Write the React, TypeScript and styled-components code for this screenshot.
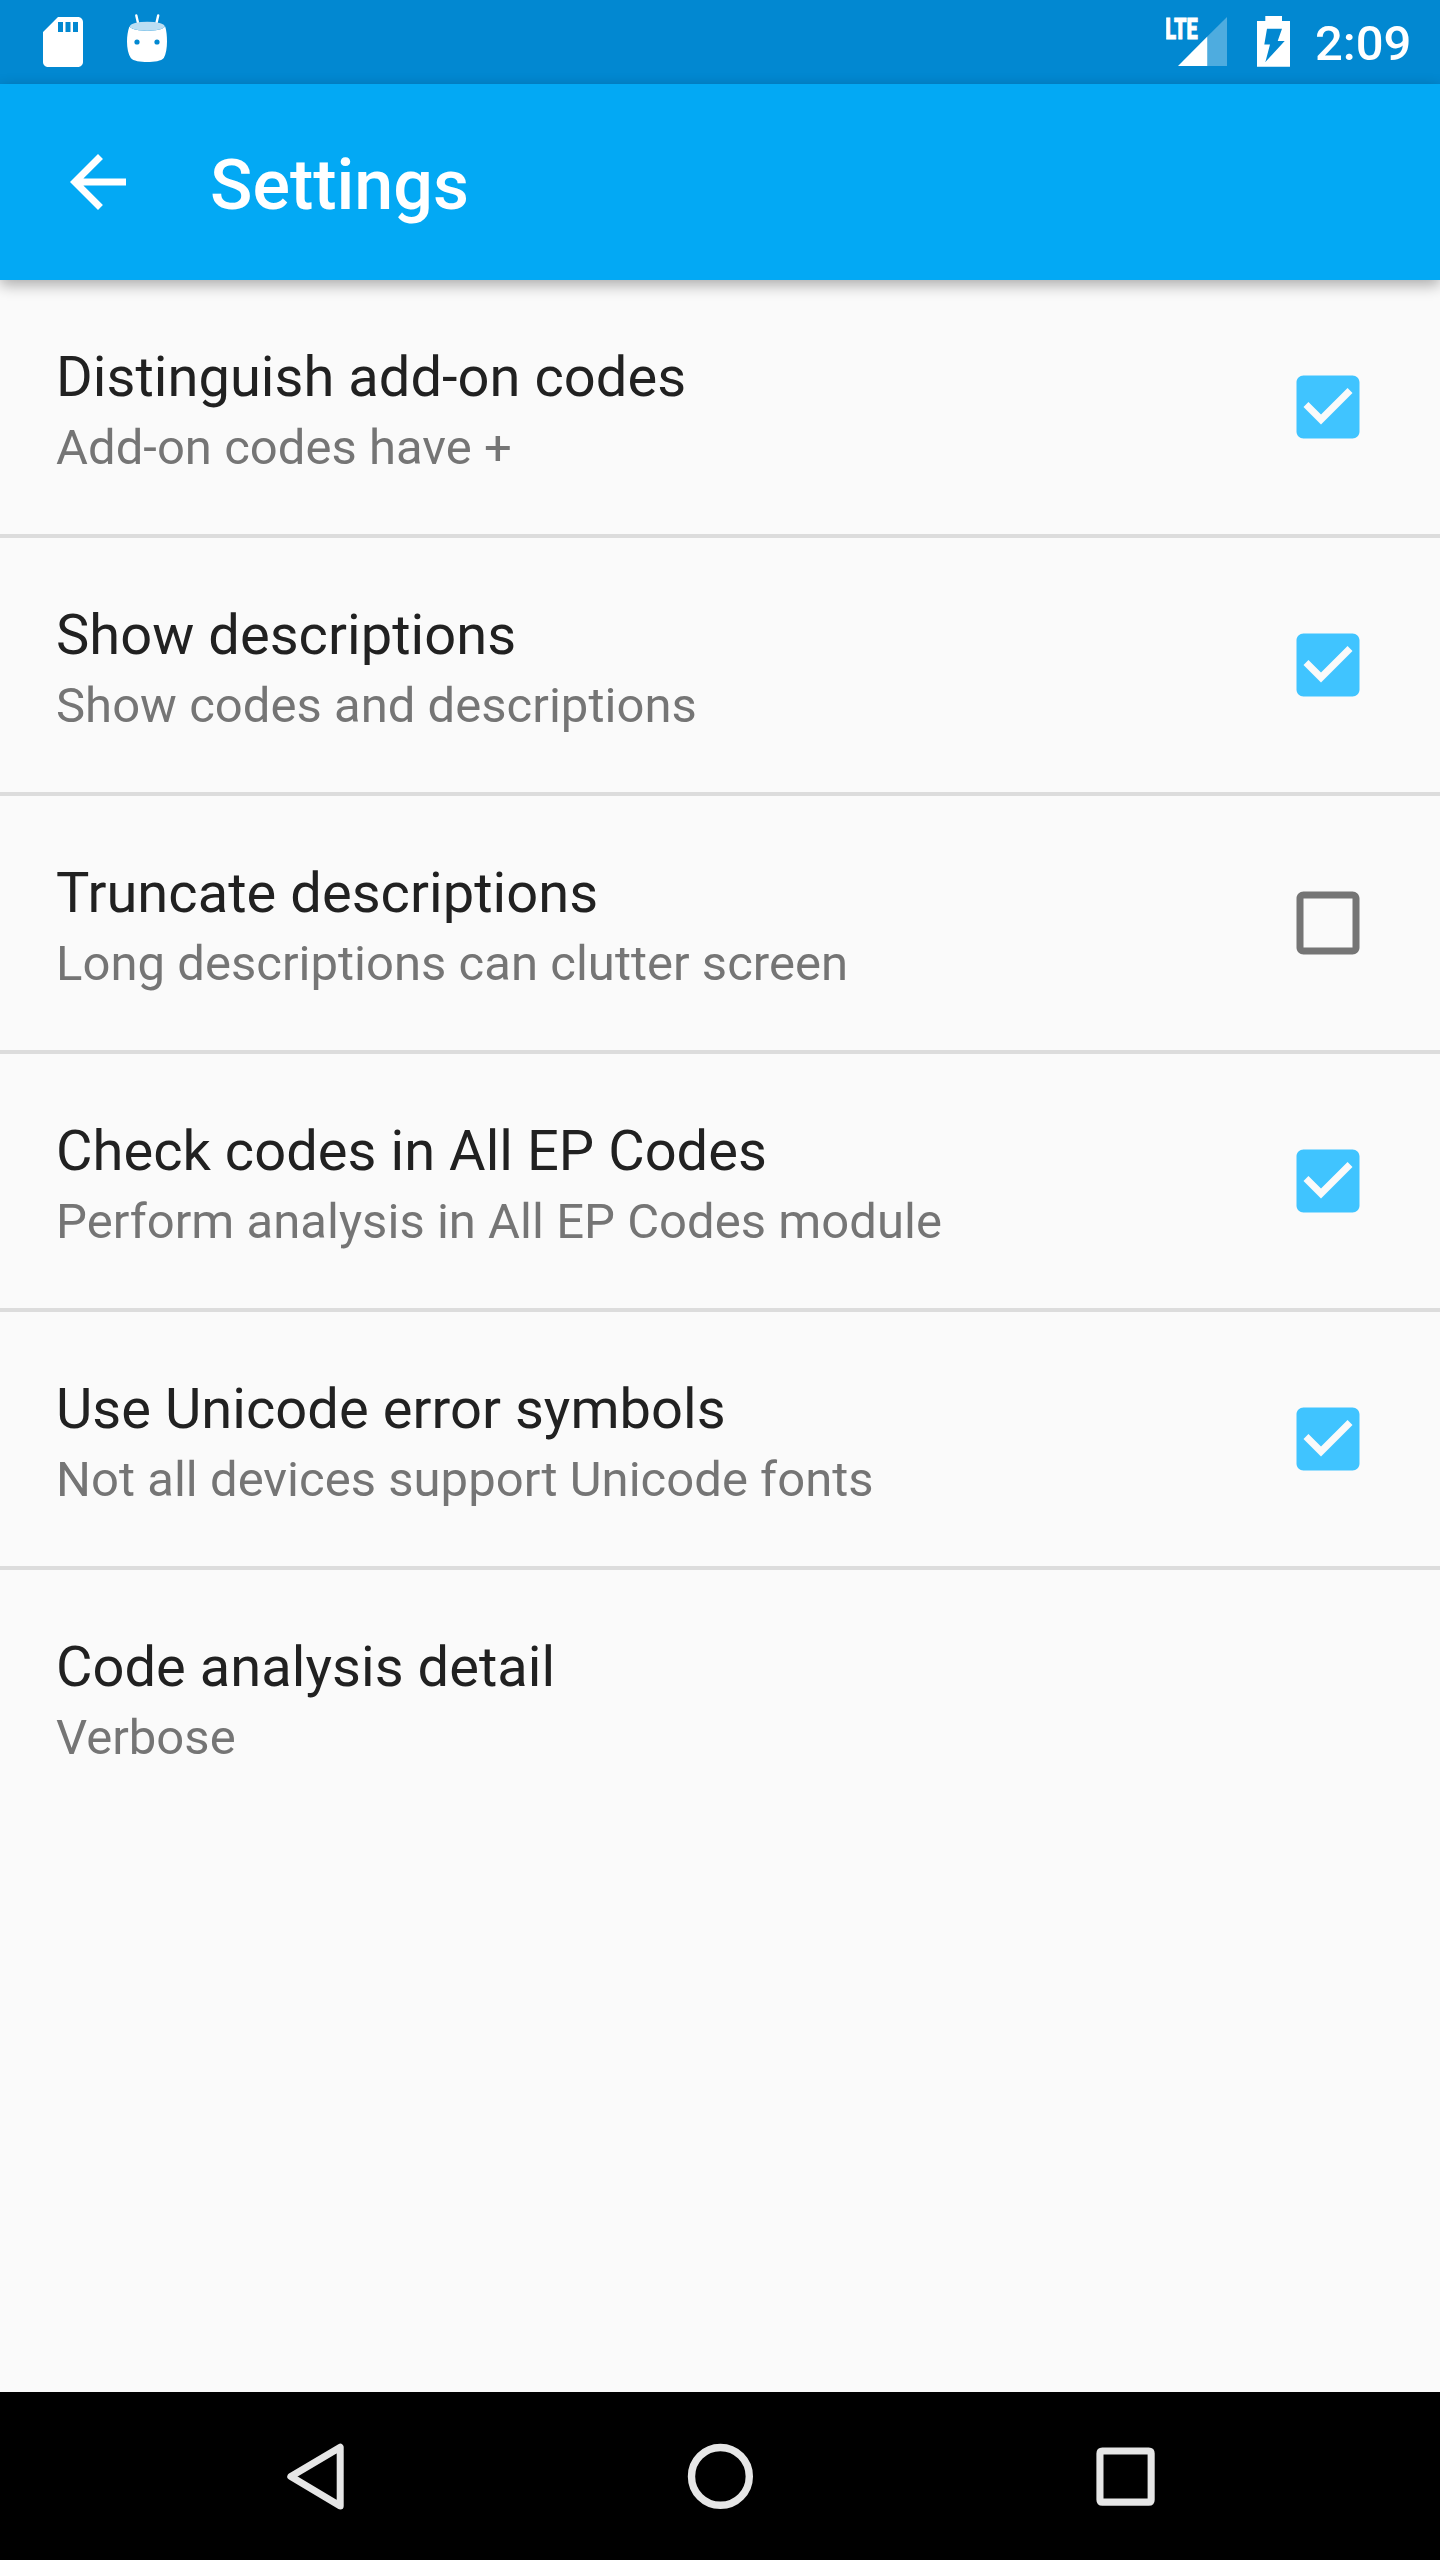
import React, { useState } from "react";
import styled, { createGlobalStyle } from "styled-components";

const GlobalStyle = createGlobalStyle`
  *, *::before, *::after { box-sizing: border-box; }
  body {
    margin: 0;
    background: #fafafa;
    font-family: Roboto, "Liberation Sans", sans-serif;
  }
  svg { display: block; flex: none; }
`;

const Screen = styled.div`
  display: flex;
  flex-direction: column;
  width: 1440px;
  height: 2560px;
  overflow: hidden;
  background: #fafafa;
`;

const StatusBar = styled.header`
  display: flex;
  flex: none;
  align-items: center;
  justify-content: space-between;
  height: 84px;
  padding: 0 28px 0 33px;
  background: #0288d1;
  color: #fff;
`;

const Notifications = styled.div`
  display: flex;
  gap: 24px;
`;

const SystemStatus = styled.div`
  display: flex;
  align-items: center;
`;

const BatterySlot = styled.div`
  margin-left: 27px;
`;

const Clock = styled.time`
  width: 97px;
  margin-left: 25px;
  padding-top: 4px;
  font-size: 49px;
  font-weight: 500;
  line-height: 58px;
  white-space: nowrap;
`;

const AppBar = styled.div`
  display: flex;
  flex: none;
  align-items: center;
  z-index: 1;
  height: 196px;
  padding-left: 56px;
  background: #03a9f4;
  color: #fff;
  box-shadow: 0 5px 14px rgba(0, 0, 0, 0.32);
`;

const BackButton = styled.button`
  display: block;
  width: 84px;
  height: 84px;
  padding: 0;
  border: 0;
  background: none;
  color: inherit;
`;

const Heading = styled.h1`
  margin: 6px 0 0 70px;
  font-size: 70px;
  font-weight: 500;
  line-height: 82px;
`;

const PreferenceList = styled.main`
  flex: 1;
`;

const PreferenceRow = styled.div`
  display: flex;
  align-items: center;
  justify-content: space-between;
  height: 258px;
  padding: 0 70px 0 56px;
  border-bottom: 4px solid #dcdcdc;

  &:last-child { border-bottom-color: transparent; }
`;

const Labels = styled.div`
  display: flex;
  flex-direction: column;
  gap: 9px;
  padding-top: 7px;
`;

const Title = styled.div`
  color: #212121;
  font-size: 56px;
  line-height: 66px;
  letter-spacing: 0.05px;
`;

const Summary = styled.div`
  color: #757575;
  font-size: 49px;
  line-height: 58px;
  letter-spacing: 0.03px;
`;

const CheckButton = styled.button<{ $checked: boolean }>`
  width: 84px;
  height: 84px;
  padding: 0;
  border: 0;
  background: none;
  color: ${(p) => (p.$checked ? "#40c4ff" : "#757575")};
`;

const NavigationBar = styled.nav`
  display: grid;
  flex: none;
  grid-template-columns: repeat(3, 405px);
  justify-content: center;
  height: 168px;
  background: #000;
`;

const NavButton = styled.button`
  display: flex;
  align-items: center;
  justify-content: center;
  padding: 0;
  border: 0;
  background: none;
  color: #e6e6e6;
`;

const SdCardIcon = () => (
  <svg width="60" height="60" viewBox="0 0 24 24" fill="currentColor">
    <path d="M18 2h-8L4 8v12c0 1.1.9 2 2 2h12c1.1 0 2-.9 2-2V4c0-1.1-.9-2-2-2zm-6 6h-2V4h2v4zm3 0h-2V4h2v4zm3 0h-2V4h2v4z" />
  </svg>
);

const RobotIcon = () => (
  <svg width="60" height="60" viewBox="0 0 60 60" fill="currentColor">
    <path d="M19.3 3.5L21.5 13M41.2 3.5L39 13" stroke="currentColor" strokeWidth="2.4" strokeLinecap="round" fill="none" />
    <path d="M12.4 14.5C15 17.5 22 18.7 30.3 18.7S45.5 17.5 48.2 14.5C49.6 19 50 24 50 29.5C50 36 49 42 46.8 46C44.5 49 37 50 30.3 50S16 49 13.8 46C11.2 42 10 36 10 29.5C10 24 10.8 19 12.4 14.5Z" />
    <ellipse cx="30.3" cy="14.2" rx="17.3" ry="4.5" fill="#bbdef3" />
    <circle cx="20" cy="30" r="2.6" fill="#0288d1" />
    <circle cx="40" cy="30" r="2.6" fill="#0288d1" />
  </svg>
);

const SignalIcon = () => (
  <svg width="64" height="60" viewBox="0 0 64 60" fill="currentColor">
    <path d="M41.3 24.6L61 5V54H41.3Z" opacity="0.3" />
    <path d="M12 54L41.3 24.6V54Z" />
    <text
      x="-0.8"
      y="26.8"
      fontSize="29"
      fontWeight="900"
      fontFamily="Roboto, sans-serif"
      textLength="32.6"
      lengthAdjust="spacingAndGlyphs"
      stroke="currentColor"
      strokeWidth="0.8"
    >
      LTE
    </text>
  </svg>
);

const BatteryIcon = () => (
  <svg width="33" height="60" viewBox="0 0 33 60" fill="currentColor">
    <path
      fillRule="evenodd"
      d="M8.3 4H25V9H33V54.7H0V9H8.3ZM10 16.7L7.3 32.6H13L8.4 50L27.7 29H20.7L25 16.7Z"
    />
  </svg>
);

const ArrowBackIcon = () => (
  <svg width="84" height="84" viewBox="0 0 24 24" fill="currentColor">
    <path d="M20 11H7.83l5.59-5.59L12 4l-8 8 8 8 1.41-1.41L7.83 13H20v-2z" />
  </svg>
);

const CheckedIcon = () => (
  <svg width="84" height="84" viewBox="0 0 24 24" fill="currentColor">
    <path d="M19 3H5c-1.11 0-2 .9-2 2v14c0 1.1.89 2 2 2h14c1.11 0 2-.9 2-2V5c0-1.1-.89-2-2-2zm-9 14l-5-5 1.41-1.41L10 14.17l7.59-7.59L19 8l-9 9z" />
  </svg>
);

const UncheckedIcon = () => (
  <svg width="84" height="84" viewBox="0 0 24 24" fill="currentColor">
    <path d="M19 5v14H5V5h14m0-2H5c-1.1 0-2 .9-2 2v14c0 1.1.9 2 2 2h14c1.1 0 2-.9 2-2V5c0-1.1-.9-2-2-2z" />
  </svg>
);

const NavBackIcon = () => (
  <svg width="84" height="84" viewBox="0 0 84 84" fill="none" stroke="currentColor" strokeWidth="7">
    <path d="M17.8 42.6L67.2 13.2V72Z" strokeLinejoin="round" />
  </svg>
);

const NavHomeIcon = () => (
  <svg width="84" height="84" viewBox="0 0 84 84" fill="none" stroke="currentColor" strokeWidth="7.4">
    <circle cx="42.4" cy="42.4" r="28.9" />
  </svg>
);

const NavRecentsIcon = () => (
  <svg width="84" height="84" viewBox="0 0 84 84" fill="currentColor">
    <path
      fillRule="evenodd"
      d="M19.4 13.4H65.7Q71.7 13.4 71.7 19.4V65.7Q71.7 71.7 65.7 71.7H19.4Q13.4 71.7 13.4 65.7V19.4Q13.4 13.4 19.4 13.4ZM20.5 20.5V64.5H64.6V20.5Z"
    />
  </svg>
);

interface Preference {
  title: string;
  summary: string;
  checked?: boolean;
}

const initialPreferences: Preference[] = [
  { title: "Distinguish add-on codes", summary: "Add-on codes have +", checked: true },
  { title: "Show descriptions", summary: "Show codes and descriptions", checked: true },
  { title: "Truncate descriptions", summary: "Long descriptions can clutter screen", checked: false },
  { title: "Check codes in All EP Codes", summary: "Perform analysis in All EP Codes module", checked: true },
  { title: "Use Unicode error symbols", summary: "Not all devices support Unicode fonts", checked: true },
  { title: "Code analysis detail", summary: "Verbose" },
];

export default function App() {
  const [preferences, setPreferences] = useState(initialPreferences);

  const toggle = (title: string) =>
    setPreferences((list) => list.map((p) => (p.title === title ? { ...p, checked: !p.checked } : p)));

  return (
    <>
      <GlobalStyle />
      <Screen>
        <StatusBar>
          <Notifications>
            <SdCardIcon />
            <RobotIcon />
          </Notifications>
          <SystemStatus>
            <SignalIcon />
            <BatterySlot>
              <BatteryIcon />
            </BatterySlot>
            <Clock>2:09</Clock>
          </SystemStatus>
        </StatusBar>
        <AppBar>
          <BackButton aria-label="Navigate up">
            <ArrowBackIcon />
          </BackButton>
          <Heading>Settings</Heading>
        </AppBar>
        <PreferenceList>
          {preferences.map(({ title, summary, checked }) => (
            <PreferenceRow key={title}>
              <Labels>
                <Title>{title}</Title>
                <Summary>{summary}</Summary>
              </Labels>
              {checked !== undefined && (
                <CheckButton
                  role="checkbox"
                  aria-checked={checked}
                  aria-label={title}
                  $checked={checked}
                  onClick={() => toggle(title)}
                >
                  {checked ? <CheckedIcon /> : <UncheckedIcon />}
                </CheckButton>
              )}
            </PreferenceRow>
          ))}
        </PreferenceList>
        <NavigationBar>
          <NavButton aria-label="Back">
            <NavBackIcon />
          </NavButton>
          <NavButton aria-label="Home">
            <NavHomeIcon />
          </NavButton>
          <NavButton aria-label="Recent apps">
            <NavRecentsIcon />
          </NavButton>
        </NavigationBar>
      </Screen>
    </>
  );
}
